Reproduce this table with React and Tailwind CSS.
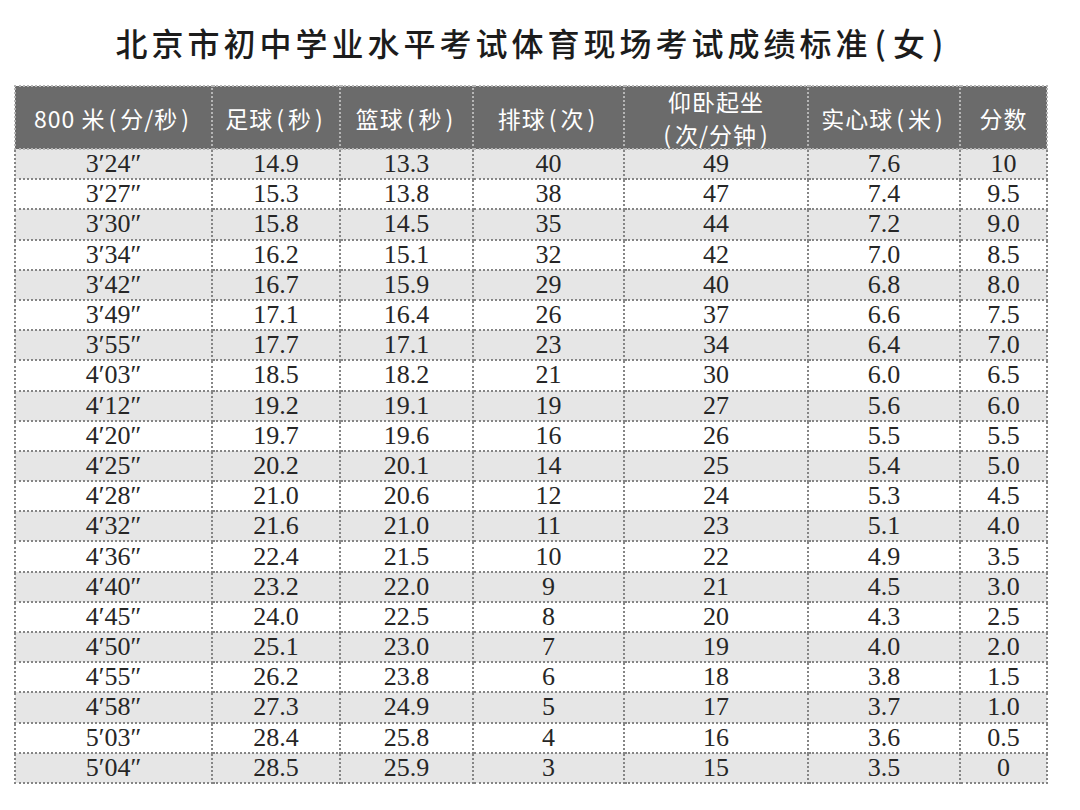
const P = ({ children }) => <span className="mx-[3px]">{children}</span>;

const columns = [
  { w: 197, label: [<>800 米<P>(</P>分/秒<P>)</P></>] },
  { w: 128, label: [<>足球<P>(</P>秒<P>)</P></>] },
  { w: 133, label: [<>篮球<P>(</P>秒<P>)</P></>] },
  { w: 151, label: [<>排球<P>(</P>次<P>)</P></>] },
  { w: 184, label: ["仰卧起坐", <><P>(</P>次/分钟<P>)</P></>] },
  { w: 152, label: [<>实心球<P>(</P>米<P>)</P></>] },
  { w: 87, label: ["分数"] },
];

const rows = [
  ["3′24″", "14.9", "13.3", "40", "49", "7.6", "10"],
  ["3′27″", "15.3", "13.8", "38", "47", "7.4", "9.5"],
  ["3′30″", "15.8", "14.5", "35", "44", "7.2", "9.0"],
  ["3′34″", "16.2", "15.1", "32", "42", "7.0", "8.5"],
  ["3′42″", "16.7", "15.9", "29", "40", "6.8", "8.0"],
  ["3′49″", "17.1", "16.4", "26", "37", "6.6", "7.5"],
  ["3′55″", "17.7", "17.1", "23", "34", "6.4", "7.0"],
  ["4′03″", "18.5", "18.2", "21", "30", "6.0", "6.5"],
  ["4′12″", "19.2", "19.1", "19", "27", "5.6", "6.0"],
  ["4′20″", "19.7", "19.6", "16", "26", "5.5", "5.5"],
  ["4′25″", "20.2", "20.1", "14", "25", "5.4", "5.0"],
  ["4′28″", "21.0", "20.6", "12", "24", "5.3", "4.5"],
  ["4′32″", "21.6", "21.0", "11", "23", "5.1", "4.0"],
  ["4′36″", "22.4", "21.5", "10", "22", "4.9", "3.5"],
  ["4′40″", "23.2", "22.0", "9", "21", "4.5", "3.0"],
  ["4′45″", "24.0", "22.5", "8", "20", "4.3", "2.5"],
  ["4′50″", "25.1", "23.0", "7", "19", "4.0", "2.0"],
  ["4′55″", "26.2", "23.8", "6", "18", "3.8", "1.5"],
  ["4′58″", "27.3", "24.9", "5", "17", "3.7", "1.0"],
  ["5′03″", "28.4", "25.8", "4", "16", "3.6", "0.5"],
  ["5′04″", "28.5", "25.9", "3", "15", "3.5", "0"],
];

export default function App() {
  return (
    <div className="w-[1080px] h-[810px] bg-white overflow-hidden">
      {/* Title */}
      <h1 className="pt-[22px] pr-[14px] h-[85px] text-center text-[32px] leading-[40px] tracking-[4px] font-medium text-[#1c1c1c] font-['Noto_Sans_CJK_SC','Noto_Sans',sans-serif]">
        北京市初中学业水平考试体育现场考试成绩标准<P>(</P>女<P>)</P>
      </h1>

      {/* Score table */}
      <table className="ml-[14px] w-[1032px] table-fixed border-collapse border-2 border-dotted border-[#858585]">
        <colgroup>
          {columns.map((c, i) => (
            <col key={i} style={{ width: c.w }} />
          ))}
        </colgroup>
        <thead>
          <tr className="h-[63px] bg-[#6b6b6b]">
            {columns.map((c, i) => (
              <th
                key={i}
                className="border-2 border-dotted border-[#b5b5b5] p-0 text-center align-middle font-normal text-white text-[23px] leading-[26px] tracking-[1px] font-['Noto_Sans_CJK_SC','Noto_Sans',sans-serif]"
              >
                {c.label.map((l, j) => (
                  <div key={j} className={j > 0 ? "mt-[7px]" : ""}>
                    {l}
                  </div>
                ))}
              </th>
            ))}
          </tr>
        </thead>
        <tbody>
          {rows.map((r, i) => (
            <tr key={i} className={`h-[30.2px] ${i % 2 === 0 ? "bg-[#e6e6e6]" : "bg-white"}`}>
              {r.map((v, j) => (
                <td
                  key={j}
                  className="border-2 border-dotted border-[#858585] p-0 text-center align-middle text-[26px] leading-[26px] text-[#262626] font-['Liberation_Serif',serif]"
                >
                  {v}
                </td>
              ))}
            </tr>
          ))}
        </tbody>
      </table>
    </div>
  );
}
